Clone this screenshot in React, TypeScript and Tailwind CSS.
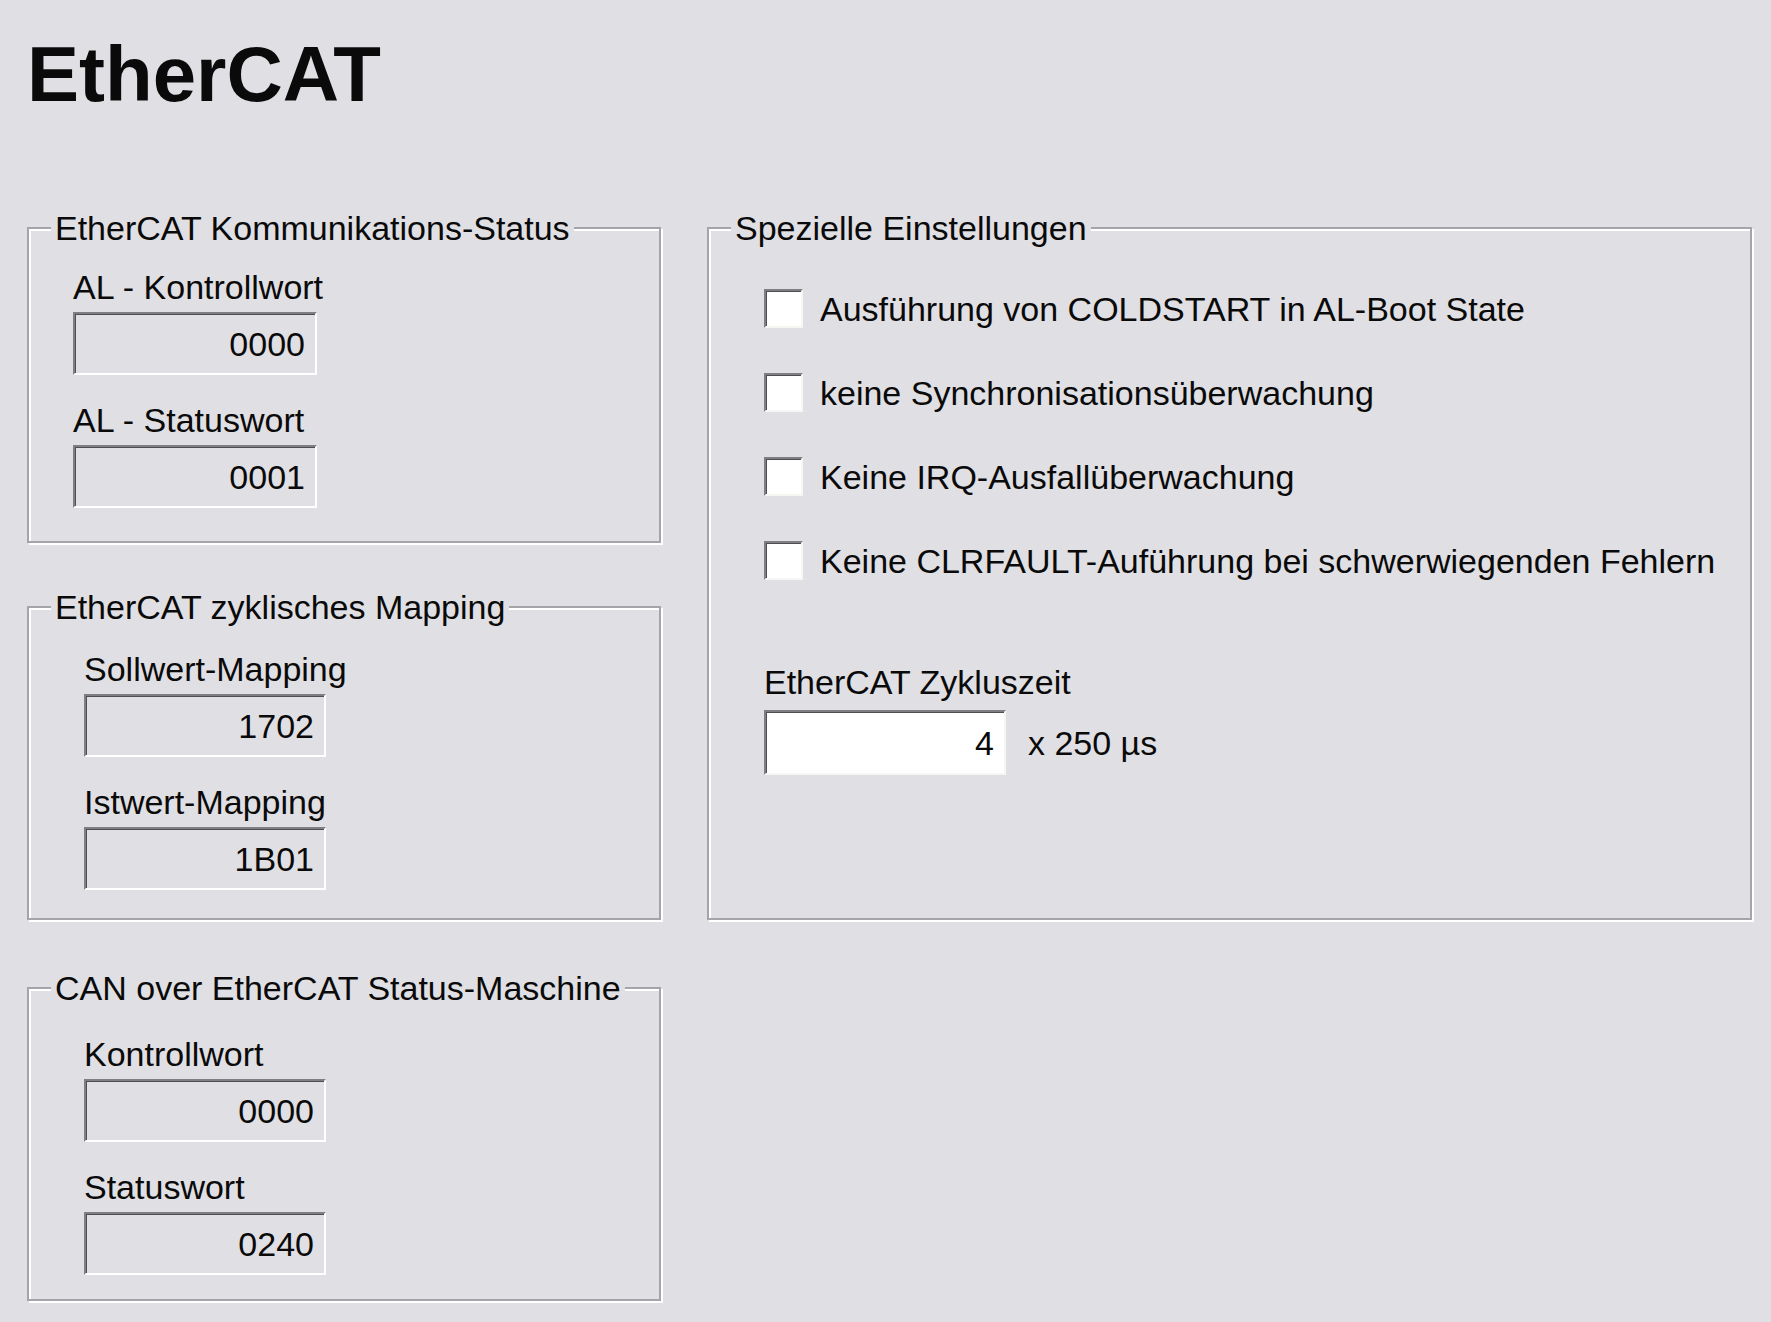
import type { ReactNode } from 'react';

type GroupBoxProps = {
  title: string;
  className?: string;
  children: ReactNode;
};

// etched windows-style group frame, caption sits on the top line
function GroupBox({ title, className = '', children }: GroupBoxProps) {
  return (
    <div
      className={`relative border-2 border-[#a5a4a9] shadow-[inset_2px_2px_0_#ffffff,2px_2px_0_#ffffff] ${className}`}
    >
      <span className="absolute -top-[18px] left-[22px] whitespace-nowrap bg-[#e0dfe3] px-[4px] text-[34px] leading-none">
        {title}
      </span>
      {children}
    </div>
  );
}

function ReadOnlyField({ value, width = 'w-[244px]' }: { value: string; width?: string }) {
  return (
    <div
      className={`mt-[8px] flex h-[63px] ${width} items-center justify-end border-2 border-t-[#7f7e83] border-l-[#7f7e83] border-b-white border-r-white pr-[10px] text-[34px] leading-none shadow-[inset_1px_1px_0_#4f4e52]`}
    >
      {value}
    </div>
  );
}

function Checkbox({ label }: { label: string }) {
  return (
    <label className="flex items-center gap-[17px]">
      <span className="h-[39px] w-[39px] shrink-0 border-2 border-t-[#7f7e83] border-l-[#7f7e83] border-b-[#f6f6f2] border-r-[#f6f6f2] bg-white shadow-[inset_1px_1px_0_#4f4e52]" />
      <span className="whitespace-nowrap text-[34px] leading-none">{label}</span>
    </label>
  );
}

const options = [
  'Ausführung von COLDSTART in AL-Boot State',
  'keine Synchronisationsüberwachung',
  'Keine IRQ-Ausfallüberwachung',
  'Keine CLRFAULT-Auführung bei schwerwiegenden Fehlern',
];

export default function App() {
  return (
    <div className="h-[1322px] w-[1771px] overflow-hidden bg-[#e0dfe3] pl-[27px] pt-[35px] font-['Liberation_Sans',Arial,sans-serif] text-[#0a0a0a]">
      <h1 className="text-[78px] font-bold leading-none">EtherCAT</h1>

      <div className="mt-[114px] flex gap-[46px]">
        <div className="flex w-[634px] flex-col">
          <GroupBox title="EtherCAT Kommunikations-Status" className="h-[316px]">
            <div className="flex flex-col items-start pl-[44px] pt-[41px]">
              <span className="text-[34px] leading-none">AL - Kontrollwort</span>
              <ReadOnlyField value="0000" />
              <span className="mt-[28px] text-[34px] leading-none">AL - Statuswort</span>
              <ReadOnlyField value="0001" />
            </div>
          </GroupBox>

          <GroupBox title="EtherCAT zyklisches Mapping" className="mt-[63px] h-[314px]">
            <div className="flex flex-col items-start pl-[55px] pt-[44px]">
              <span className="text-[34px] leading-none">Sollwert-Mapping</span>
              <ReadOnlyField value="1702" width="w-[242px]" />
              <span className="mt-[28px] text-[34px] leading-none">Istwert-Mapping</span>
              <ReadOnlyField value="1B01" width="w-[242px]" />
            </div>
          </GroupBox>

          <GroupBox title="CAN over EtherCAT Status-Maschine" className="mt-[67px] h-[314px]">
            <div className="flex flex-col items-start pl-[55px] pt-[48px]">
              <span className="text-[34px] leading-none">Kontrollwort</span>
              <ReadOnlyField value="0000" width="w-[242px]" />
              <span className="mt-[28px] text-[34px] leading-none">Statuswort</span>
              <ReadOnlyField value="0240" width="w-[242px]" />
            </div>
          </GroupBox>
        </div>

        <GroupBox title="Spezielle Einstellungen" className="h-[693px] w-[1045px]">
          <div className="flex flex-col items-start pl-[55px] pt-[60px]">
            <div className="flex flex-col gap-[45px]">
              {options.map((opt) => (
                <Checkbox key={opt} label={opt} />
              ))}
            </div>

            <span className="mt-[85px] text-[34px] leading-none">EtherCAT Zykluszeit</span>
            <div className="mt-[11px] flex items-center gap-[22px]">
              <div className="flex h-[65px] w-[242px] items-center justify-end border-2 border-t-[#7f7e83] border-l-[#7f7e83] border-b-[#f6f6f2] border-r-[#f6f6f2] bg-white pr-[10px] text-[34px] leading-none shadow-[inset_1px_1px_0_#4f4e52]">
                4
              </div>
              <span className="text-[34px] leading-none">x 250 µs</span>
            </div>
          </div>
        </GroupBox>
      </div>
    </div>
  );
}
